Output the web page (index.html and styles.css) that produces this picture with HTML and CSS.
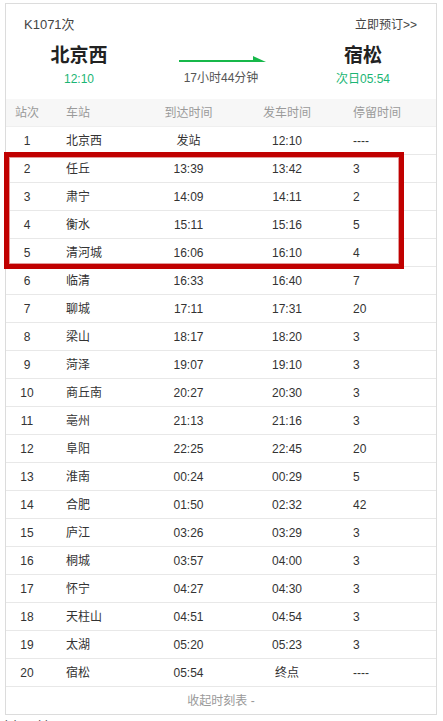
FILE: index.html
```html
<!DOCTYPE html>
<html lang="zh-CN">
<head>
<meta charset="utf-8">
<title>K1071次 时刻表</title>
<link rel="stylesheet" href="styles.css">
</head>
<body>
<div class="page">
  <div class="card">
    <div class="summary">
      <div class="summary-top">
        <span class="train-no">K1071次</span>
        <a class="book" href="#">立即预订&gt;&gt;</a>
      </div>
      <div class="route">
        <div class="end">
          <div class="station">北京西</div>
          <div class="time">12:10</div>
        </div>
        <div class="middle">
          <svg class="arrow" width="87" height="8" viewBox="0 0 87 8">
            <rect x="0" y="4" width="80" height="2" fill="#16b84a"/>
            <polygon points="74,0 87,6 74,6" fill="#16b84a"/>
          </svg>
          <div class="duration">17小时44分钟</div>
        </div>
        <div class="end">
          <div class="station">宿松</div>
          <div class="time">次日05:54</div>
        </div>
      </div>
    </div>

    <div class="row head">
      <span class="c-no">站次</span><span class="c-st">车站</span><span class="c-arr">到达时间</span><span class="c-dep">发车时间</span><span class="c-stay">停留时间</span>
    </div>
    <div class="row"><span class="c-no">1</span><span class="c-st">北京西</span><span class="c-arr">发站</span><span class="c-dep">12:10</span><span class="c-stay">----</span></div>
    <div class="row"><span class="c-no">2</span><span class="c-st">任丘</span><span class="c-arr">13:39</span><span class="c-dep">13:42</span><span class="c-stay">3</span></div>
    <div class="row"><span class="c-no">3</span><span class="c-st">肃宁</span><span class="c-arr">14:09</span><span class="c-dep">14:11</span><span class="c-stay">2</span></div>
    <div class="row"><span class="c-no">4</span><span class="c-st">衡水</span><span class="c-arr">15:11</span><span class="c-dep">15:16</span><span class="c-stay">5</span></div>
    <div class="row"><span class="c-no">5</span><span class="c-st">清河城</span><span class="c-arr">16:06</span><span class="c-dep">16:10</span><span class="c-stay">4</span></div>
    <div class="row"><span class="c-no">6</span><span class="c-st">临清</span><span class="c-arr">16:33</span><span class="c-dep">16:40</span><span class="c-stay">7</span></div>
    <div class="row"><span class="c-no">7</span><span class="c-st">聊城</span><span class="c-arr">17:11</span><span class="c-dep">17:31</span><span class="c-stay">20</span></div>
    <div class="row"><span class="c-no">8</span><span class="c-st">梁山</span><span class="c-arr">18:17</span><span class="c-dep">18:20</span><span class="c-stay">3</span></div>
    <div class="row"><span class="c-no">9</span><span class="c-st">菏泽</span><span class="c-arr">19:07</span><span class="c-dep">19:10</span><span class="c-stay">3</span></div>
    <div class="row"><span class="c-no">10</span><span class="c-st">商丘南</span><span class="c-arr">20:27</span><span class="c-dep">20:30</span><span class="c-stay">3</span></div>
    <div class="row"><span class="c-no">11</span><span class="c-st">亳州</span><span class="c-arr">21:13</span><span class="c-dep">21:16</span><span class="c-stay">3</span></div>
    <div class="row"><span class="c-no">12</span><span class="c-st">阜阳</span><span class="c-arr">22:25</span><span class="c-dep">22:45</span><span class="c-stay">20</span></div>
    <div class="row"><span class="c-no">13</span><span class="c-st">淮南</span><span class="c-arr">00:24</span><span class="c-dep">00:29</span><span class="c-stay">5</span></div>
    <div class="row"><span class="c-no">14</span><span class="c-st">合肥</span><span class="c-arr">01:50</span><span class="c-dep">02:32</span><span class="c-stay">42</span></div>
    <div class="row"><span class="c-no">15</span><span class="c-st">庐江</span><span class="c-arr">03:26</span><span class="c-dep">03:29</span><span class="c-stay">3</span></div>
    <div class="row"><span class="c-no">16</span><span class="c-st">桐城</span><span class="c-arr">03:57</span><span class="c-dep">04:00</span><span class="c-stay">3</span></div>
    <div class="row"><span class="c-no">17</span><span class="c-st">怀宁</span><span class="c-arr">04:27</span><span class="c-dep">04:30</span><span class="c-stay">3</span></div>
    <div class="row"><span class="c-no">18</span><span class="c-st">天柱山</span><span class="c-arr">04:51</span><span class="c-dep">04:54</span><span class="c-stay">3</span></div>
    <div class="row"><span class="c-no">19</span><span class="c-st">太湖</span><span class="c-arr">05:20</span><span class="c-dep">05:23</span><span class="c-stay">3</span></div>
    <div class="row"><span class="c-no">20</span><span class="c-st">宿松</span><span class="c-arr">05:54</span><span class="c-dep">终点</span><span class="c-stay">----</span></div>
    <div class="collapse">收起时刻表 -</div>
  </div>
  <div class="note">lcj·ｍshi</div>
  <div class="highlight"></div>
</div>
</body>
</html>
```

FILE: styles.css
```css
* { box-sizing: border-box; }

body {
  margin: 0;
  background: #fff;
  font-family: "Liberation Sans", Arial, "Noto Sans CJK SC", sans-serif;
  color: #333;
  font-size: 12px;
}

.page {
  position: relative;
  padding: 3px 6px 0 5px;
}

.card {
  border: 1px solid #dcdcdc;
  background: #fff;
}

.summary {
  height: 95px;
  padding: 11px 18px 0 18px;
}

.summary-top {
  display: flex;
  justify-content: space-between;
  align-items: center;
  height: 16px;
}

.train-no {
  font-size: 13px;
  color: #444;
}

.book {
  font-size: 12px;
  color: #444;
  text-decoration: none;
  margin-right: 1px;
}

.route {
  display: grid;
  grid-template-columns: 146px 1fr 146px;
  margin: 14px -18px 0 -18px;
}

.end {
  display: flex;
  flex-direction: column;
  align-items: center;
  gap: 4px;
}

.station {
  font-size: 19px;
  font-weight: bold;
  line-height: 22px;
  color: #222;
}

.time {
  font-size: 12px;
  line-height: 16px;
  color: #1bb574;
}

.middle {
  display: flex;
  flex-direction: column;
  align-items: center;
  padding-top: 11px;
  gap: 6px;
}

.arrow {
  display: block;
  margin-left: 2px;
}

.duration {
  font-size: 12px;
  line-height: 16px;
  color: #555;
}

.row {
  display: grid;
  grid-template-columns: 42px 92px 97px 100px 1fr;
  height: 28px;
  align-items: center;
  border-bottom: 1px solid #e8e8e8;
  line-height: 16px;
}

.row.head {
  background: #f7f7f7;
  color: #9a9a9a;
  border-bottom-color: #efefef;
}

.c-no { text-align: center; }
.c-st { padding-left: 18px; }
.c-arr { text-align: center; }
.c-dep { text-align: center; }
.c-stay { padding-left: 16px; }

.collapse {
  height: 27px;
  line-height: 28px;
  text-align: center;
  color: #999;
}

.note {
  margin-top: 3px;
  font-size: 12px;
  line-height: 14px;
  color: #555;
}

.highlight {
  position: absolute;
  top: 152px;
  left: 4px;
  width: 400px;
  height: 117px;
  border: 5px solid #c00000;
  box-shadow: inset 0 0 0 1px #e29a9a;
}
```
